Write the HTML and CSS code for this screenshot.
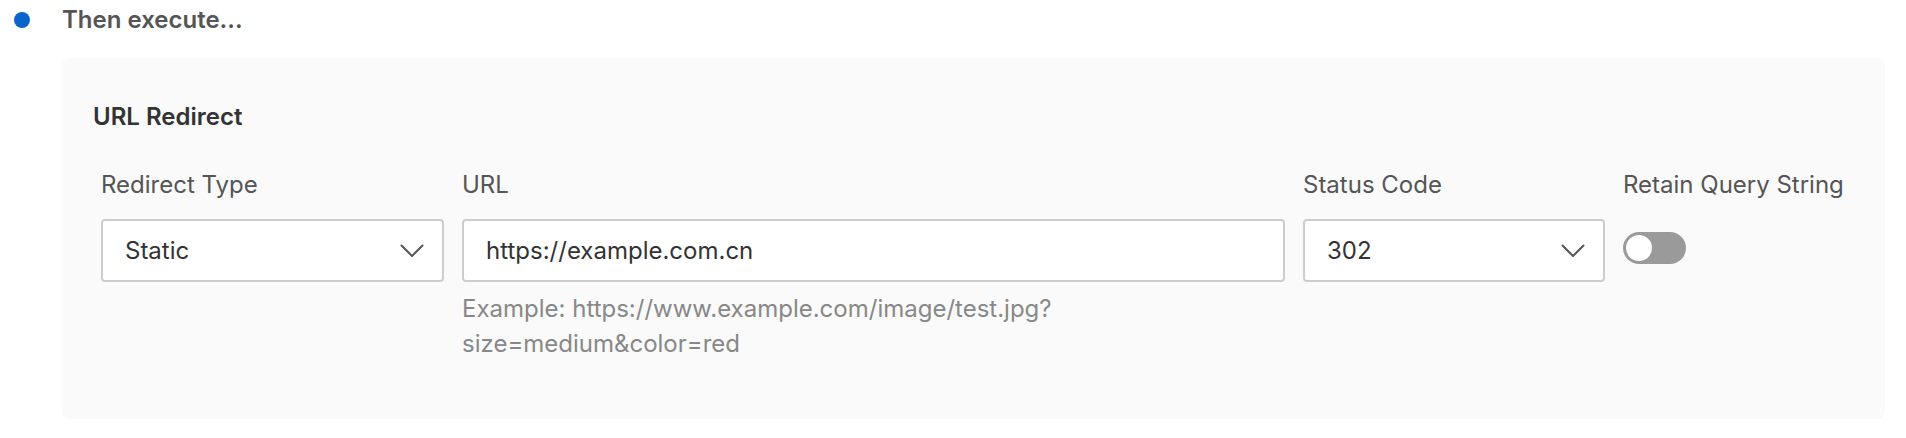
FILE: index.html
```html
<!DOCTYPE html>
<html lang="en">
<head>
<meta charset="utf-8">
<title>URL Redirect</title>
<link rel="stylesheet" href="styles.css">
</head>
<body>
<div class="step">
  <div class="step-head">
    <span class="dot"></span>
    <span class="step-title">Then execute...</span>
  </div>
  <div class="card">
    <div class="card-title">URL Redirect</div>
    <div class="form-row">
      <div class="field f-type">
        <div class="label">Redirect Type</div>
        <div class="control select">
          <span class="value">Static</span>
          <svg class="chev" width="24" height="14" viewBox="0 0 24 14"><polyline points="1.5,1.5 12,12 22.5,1.5" fill="none" stroke="#555" stroke-width="2" stroke-linecap="round" stroke-linejoin="round"/></svg>
        </div>
      </div>
      <div class="field f-url">
        <div class="label">URL</div>
        <div class="control input">
          <span class="value">https://example.com.cn</span>
        </div>
        <div class="help">Example: https://www.example.com/image/test.jpg?<br>size=medium&amp;color=red</div>
      </div>
      <div class="field f-status">
        <div class="label">Status Code</div>
        <div class="control select">
          <span class="value">302</span>
          <svg class="chev" width="24" height="14" viewBox="0 0 24 14"><polyline points="1.5,1.5 12,12 22.5,1.5" fill="none" stroke="#555" stroke-width="2" stroke-linecap="round" stroke-linejoin="round"/></svg>
        </div>
      </div>
      <div class="field f-retain">
        <div class="label">Retain Query String</div>
        <div class="switch"><span class="knob"></span></div>
      </div>
    </div>
  </div>
</div>
</body>
</html>
```
FILE: styles.css
```css
html, body {
  margin: 0;
  padding: 0;
  background: #ffffff;
}
body {
  font-family: Inter, "Noto Sans", "Liberation Sans", sans-serif;
  font-size: 24px;
  color: #333;
}
.step {
  width: 1906px;
}
.step-head {
  display: flex;
  align-items: center;
  height: 40px;
  padding-left: 14px;
}
.dot {
  width: 16px;
  height: 16px;
  border-radius: 50%;
  background: #0a64cc;
  flex: none;
}
.step-title {
  margin-left: 32px;
  font-weight: 600;
  font-size: 24px;
  line-height: 40px;
  color: #555;
}
.card {
  margin: 18px 21px 0 62px;
  background: #fafafa;
  border-radius: 8px;
  padding: 43px 31px 58px 31px;
}
.card-title {
  font-weight: 600;
  line-height: 32px;
  color: #333;
}
.form-row {
  display: flex;
  gap: 18px;
  margin-top: 36px;
  padding-left: 8px;
}
.field {
  display: flex;
  flex-direction: column;
}
.f-type { width: 343px; }
.f-url { width: 823px; }
.f-status { width: 302px; }
.f-retain { flex: 1; }
.label {
  line-height: 32px;
  color: #555;
  white-space: nowrap;
}
.control {
  margin-top: 18px;
  height: 63px;
  box-sizing: border-box;
  border: 2px solid #cdcdcd;
  border-radius: 4px;
  background: #fff;
  display: flex;
  align-items: center;
  padding: 0 18px 0 22px;
}
.value {
  flex: 1;
  color: #333;
  white-space: nowrap;
}
.chev {
  flex: none;
  display: block;
  margin-top: 1px;
}
.help {
  margin-top: 9px;
  line-height: 35px;
  color: #888;
}
.switch {
  margin-top: 31px;
  width: 63px;
  height: 32px;
  border-radius: 16px;
  background: #9a9a9a;
  display: flex;
  align-items: center;
  padding-left: 3px;
  box-sizing: border-box;
}
.knob {
  width: 26px;
  height: 26px;
  border-radius: 50%;
  background: #fff;
}
```
